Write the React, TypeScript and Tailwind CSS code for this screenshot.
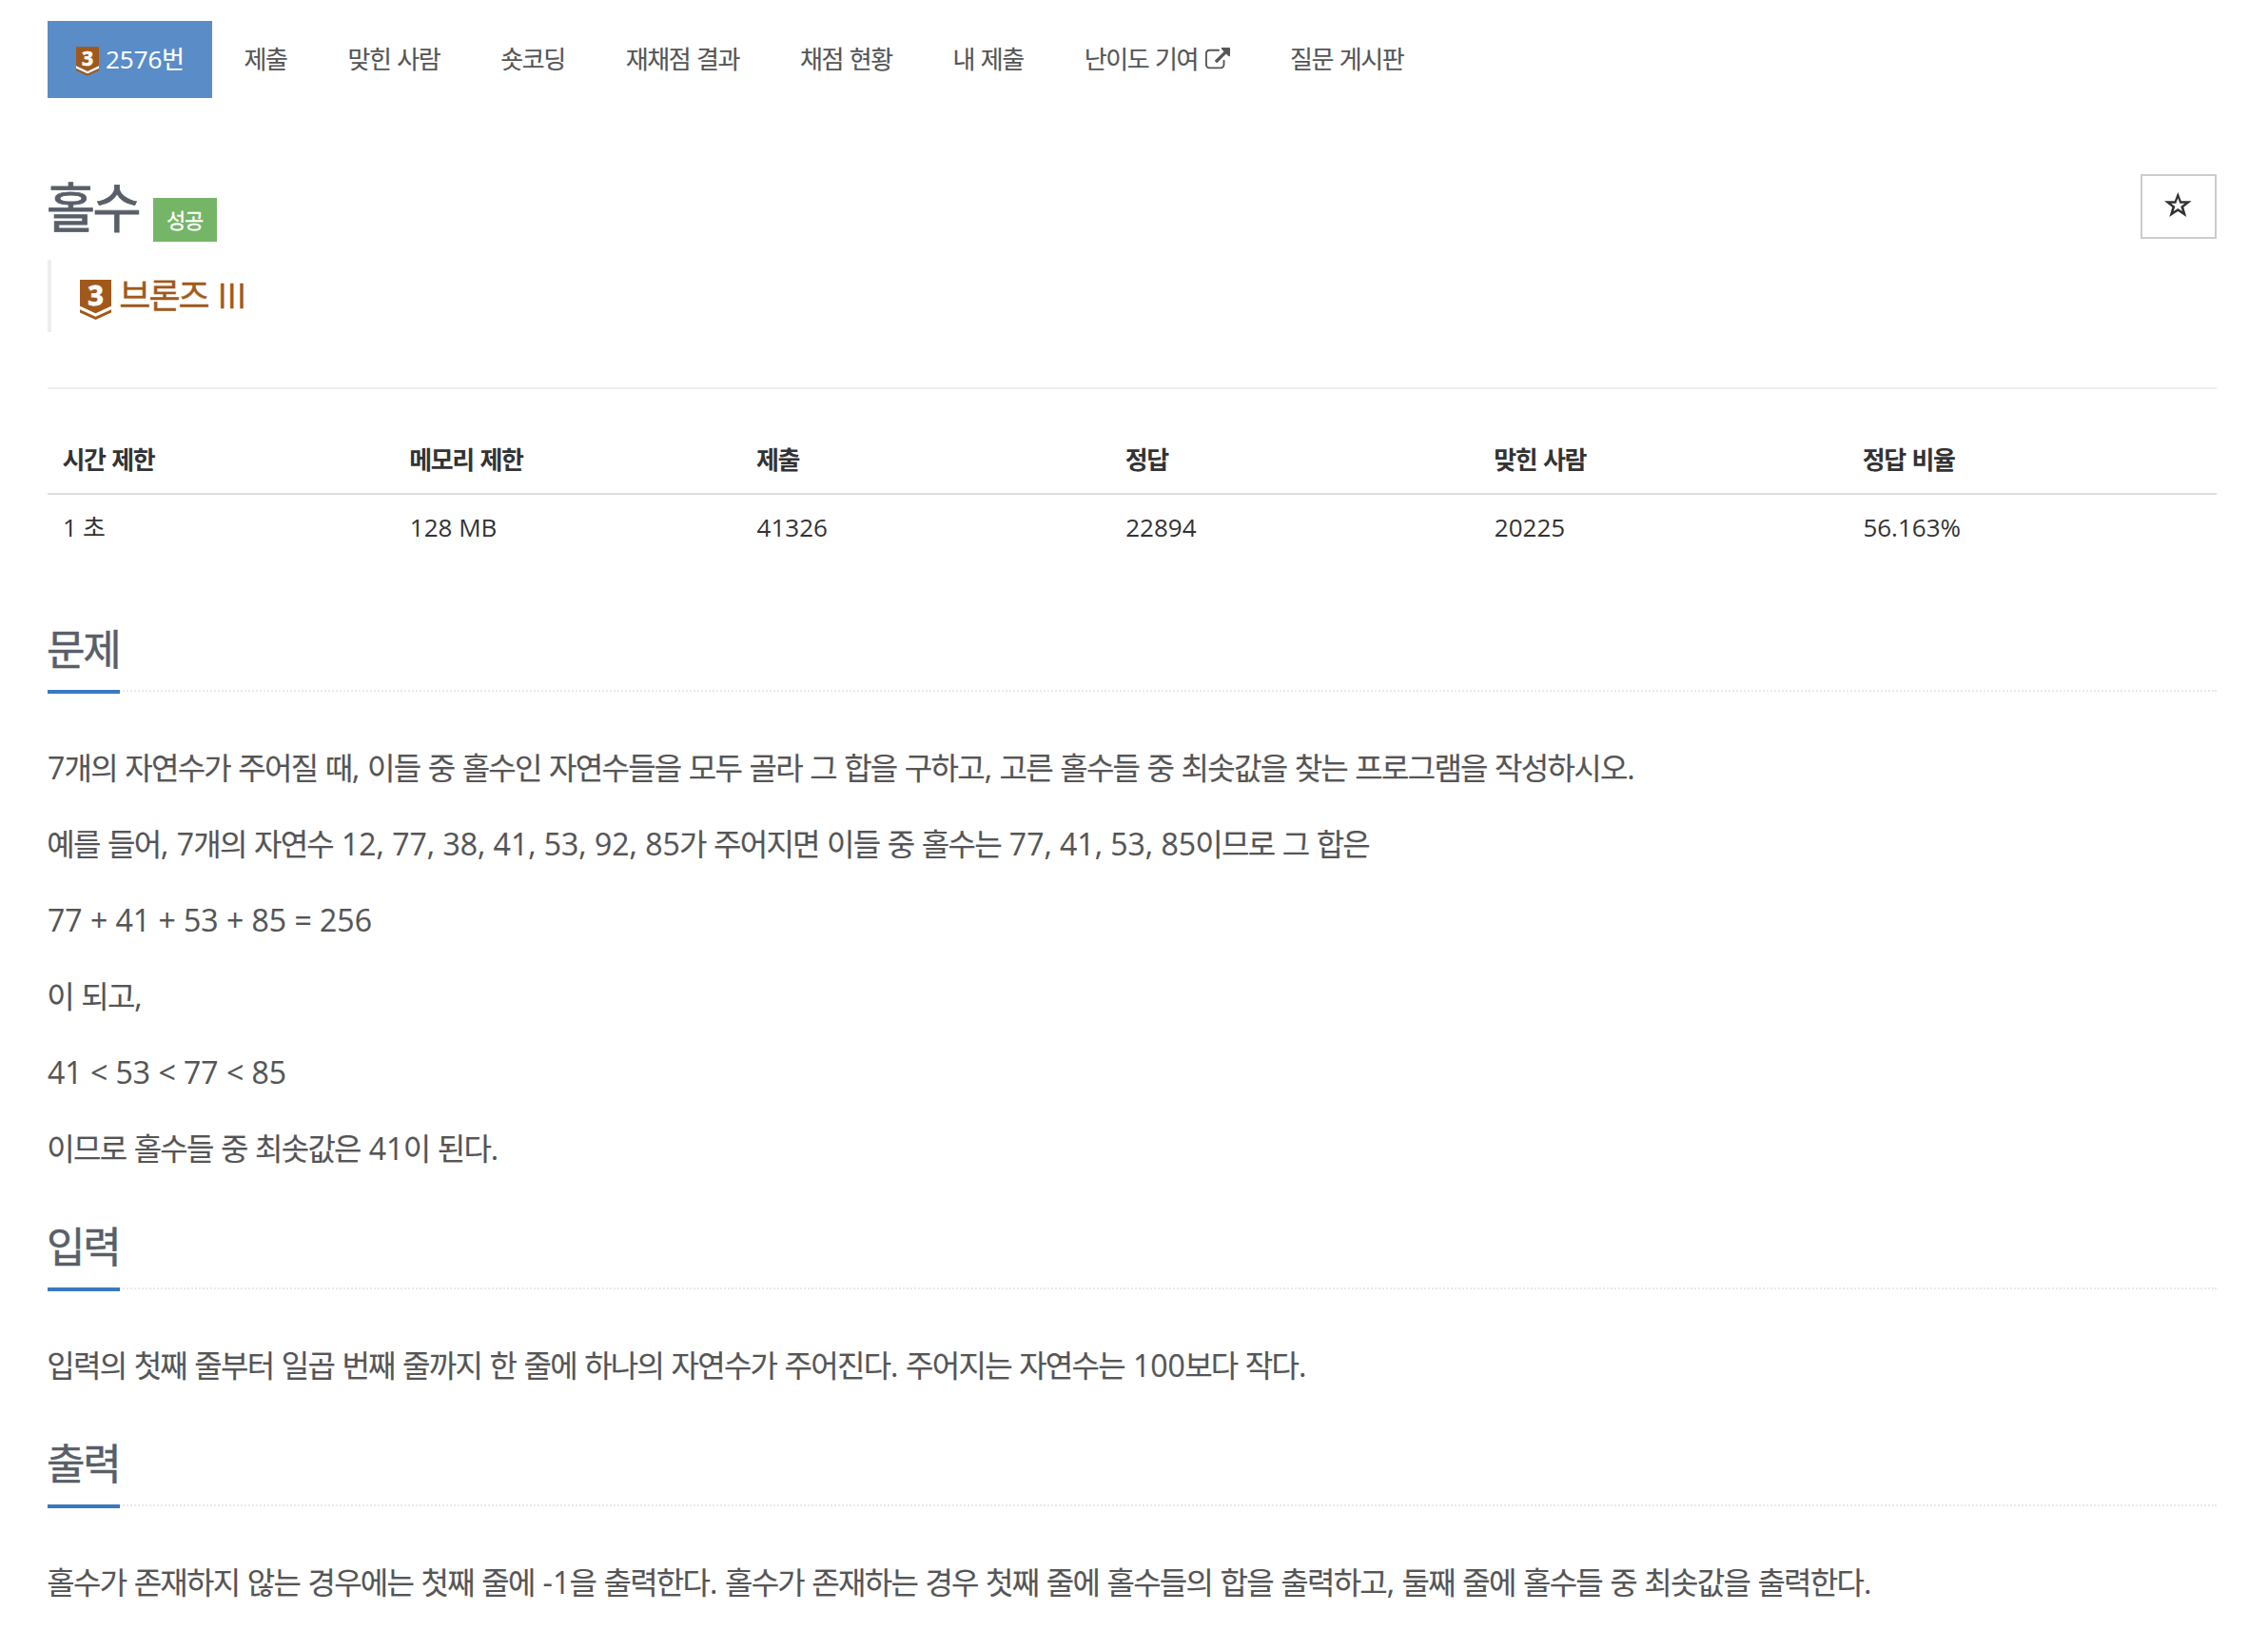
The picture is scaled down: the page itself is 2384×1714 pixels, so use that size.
import { clsx } from "clsx";

const menu = [
  { label: "제출" },
  { label: "맞힌 사람" },
  { label: "숏코딩" },
  { label: "재채점 결과" },
  { label: "채점 현황" },
  { label: "내 제출" },
  { label: "난이도 기여", external: true },
  { label: "질문 게시판" },
];

const info = [
  { label: "시간 제한", value: "1 초" },
  { label: "메모리 제한", value: "128 MB" },
  { label: "제출", value: "41326" },
  { label: "정답", value: "22894" },
  { label: "맞힌 사람", value: "20225" },
  { label: "정답 비율", value: "56.163%" },
];

const sections = [
  {
    title: "문제",
    body: [
      "7개의 자연수가 주어질 때, 이들 중 홀수인 자연수들을 모두 골라 그 합을 구하고, 고른 홀수들 중 최솟값을 찾는 프로그램을 작성하시오.",
      "예를 들어, 7개의 자연수 12, 77, 38, 41, 53, 92, 85가 주어지면 이들 중 홀수는 77, 41, 53, 85이므로 그 합은",
      "77 + 41 + 53 + 85 = 256",
      "이 되고,",
      "41 < 53 < 77 < 85",
      "이므로 홀수들 중 최솟값은 41이 된다.",
    ],
  },
  {
    title: "입력",
    body: ["입력의 첫째 줄부터 일곱 번째 줄까지 한 줄에 하나의 자연수가 주어진다. 주어지는 자연수는 100보다 작다."],
  },
  {
    title: "출력",
    body: [
      "홀수가 존재하지 않는 경우에는 첫째 줄에 -1을 출력한다. 홀수가 존재하는 경우 첫째 줄에 홀수들의 합을 출력하고, 둘째 줄에 홀수들 중 최솟값을 출력한다.",
    ],
  },
];

// Hangul runs are set a little tighter than the Latin ones
function Ko({ children }: { children: string }) {
  return (
    <>
      {children.split(/([\uAC00-\uD7A3]+)/).map((run, i) =>
        i % 2 ? (
          <span key={i} className="-ml-[0.022em] mr-[0.021em] tracking-[-0.0545em]">
            {run}
          </span>
        ) : (
          run
        )
      )}
    </>
  );
}

function Medal({ className }: { className?: string }) {
  return (
    <svg viewBox="0 0 33 42" className={clsx("shrink-0", className)}>
      <path d="M0 0h33v27.700L16.500 35.500 0 27.700z" fill="#a0591b" />
      <path d="M0 27.700L16.500 35.500 33 27.700v3.500L16.500 38.800 0 31.200z" fill="#fff" />
      <path d="M0 31.200l16.500 7.600L33 31.200v3.200L16.500 42 0 34.400z" fill="#a0591b" />
      <text
        x="16.5"
        y="26.7"
        textAnchor="middle"
        fill="#fff"
        stroke="#fff"
        strokeWidth="0.9"
        fontFamily="Open Sans"
        fontWeight="700"
        fontSize="29"
      >
        3
      </text>
    </svg>
  );
}

function ExternalIcon() {
  return (
    <svg viewBox="0 0 1792 1792" className="h-[26px] w-[26px]" fill="currentColor">
      <path d="M1408 928v320q0 119-84.500 203.500t-203.500 84.500h-832q-119 0-203.500-84.500t-84.500-203.500v-832q0-119 84.500-203.500t203.500-84.500h704q14 0 23 9t9 23v64q0 14-9 23t-23 9h-704q-66 0-113 47t-47 113v832q0 66 47 113t113 47h832q66 0 113-47t47-113v-320q0-14 9-23t23-9h64q14 0 23 9t9 23zm384-864v512q0 26-19 45t-45 19-45-19l-176-176-652 652q-10 10-23 10t-23-10l-114-114q-10-10-10-23t10-23l652-652-176-176q-19-19-19-45t19-45 45-19h512q26 0 45 19t19 45z" />
    </svg>
  );
}

function Section({ title, body }: { title: string; body: string[] }) {
  return (
    <section className="h-[228px] first:h-[628px]">
      <div className="flex h-[76px] border-b-2 border-dotted border-[#e4e9f0]">
        <h2 className="h-[78px] w-[76px] border-b-4 border-[#3b78c0] text-[44px] leading-[62px] whitespace-nowrap text-[#585f69] [-webkit-text-stroke:0.5px_currentColor]">
          <Ko>{title}</Ko>
        </h2>
      </div>
      <div className="mt-[54px] flex flex-col gap-[28px] text-[32px] leading-[52px] text-[#555] [-webkit-text-stroke:0.15px_currentColor]">
        {body.map((line) => (
          <p key={line} className="whitespace-nowrap">
            <Ko>{line}</Ko>
          </p>
        ))}
      </div>
    </section>
  );
}

export default function App() {
  return (
    <div className="h-[1714px] w-[2384px] overflow-hidden bg-white pt-[22px] pr-[54px] pl-[50px] font-['Open_Sans','Noto_Sans_CJK_KR',sans-serif] text-[#333]">
      <nav className="flex h-[81px] gap-1 text-[26px] leading-[81px] text-[#555] [-webkit-text-stroke:0.15px_currentColor]">
        <a className="flex w-[173px] items-center bg-[#5a8cc8] pl-[30px] whitespace-nowrap text-white">
          <Medal className="mt-[4px] mr-[7px] h-[31px] w-6" />
          <span>
            <Ko>2576번</Ko>
          </span>
        </a>
        {menu.map((item) => (
          <a key={item.label} className="flex items-center gap-[7px] px-[30px] whitespace-nowrap">
            <span>
              <Ko>{item.label}</Ko>
            </span>
            {item.external && <ExternalIcon />}
          </a>
        ))}
      </nav>

      <header className="mt-[80px] flex h-[90px] justify-between">
        <div className="flex">
          <h1 className="w-[97px] text-[56px] leading-[68px] whitespace-nowrap text-[#585f69] [-webkit-text-stroke:0.8px_currentColor]">
            <Ko>홀수</Ko>
          </h1>
          <span className="mt-[25px] ml-[14px] flex h-[46px] w-[67px] justify-center bg-[#75b567] text-[22px] leading-[46px] text-white [-webkit-text-stroke:0.3px_currentColor]">
            <Ko>성공</Ko>
          </span>
        </div>
        <button className="flex h-[68px] w-[80px] items-center justify-center border-2 border-[#ccc]">
          <svg viewBox="0 0 29 26" className="mr-[2px] mb-[4px] h-[26px] w-[29px]" fill="#333">
            <path
              fillRule="evenodd"
              d="M14.300 0l3.500 9.300h10.900l-8.400 6.500 3 10.200-9-6-9 6 3-10.200L0 9.300h10.800zM14.300 6.200l-2 5.600H7.100l4.300 3.100-1.700 5.200 4.600-3.100 4.600 3.100-1.700-5.200 4.300-3.100h-5.200z"
            />
          </svg>
        </button>
      </header>

      <blockquote className="flex h-[76px] items-center border-l-4 border-[#eee] pl-[30px] text-[36px] text-[#a0591b]">
        <Medal className="mt-[8px] mr-[9px] h-[42px] w-[33px]" />
        <span className="[-webkit-text-stroke:0.4px_currentColor]">
          <Ko>브론즈 III</Ko>
        </span>
      </blockquote>

      <hr className="mt-[58px] border-t-2 border-[#eee]" />

      <table className="mt-[39px] w-full table-fixed text-left text-[26px] leading-[37px]">
        <colgroup>
          <col className="w-[16%]" />
          <col className="w-[16%]" />
          <col className="w-[17%]" />
          <col className="w-[17%]" />
          <col className="w-[17%]" />
          <col className="w-[17%]" />
        </colgroup>
        <thead>
          <tr className="h-[71px] border-b-2 border-[#ddd]">
            {info.map((col) => (
              <th key={col.label} className="px-4 font-bold">
                <Ko>{col.label}</Ko>
              </th>
            ))}
          </tr>
        </thead>
        <tbody>
          <tr className="h-[70px]">
            {info.map((col) => (
              <td key={col.label} className="px-4">
                <Ko>{col.value}</Ko>
              </td>
            ))}
          </tr>
        </tbody>
      </table>

      <main className="mt-[62px]">
        {sections.map((section) => (
          <Section key={section.title} {...section} />
        ))}
      </main>
    </div>
  );
}
